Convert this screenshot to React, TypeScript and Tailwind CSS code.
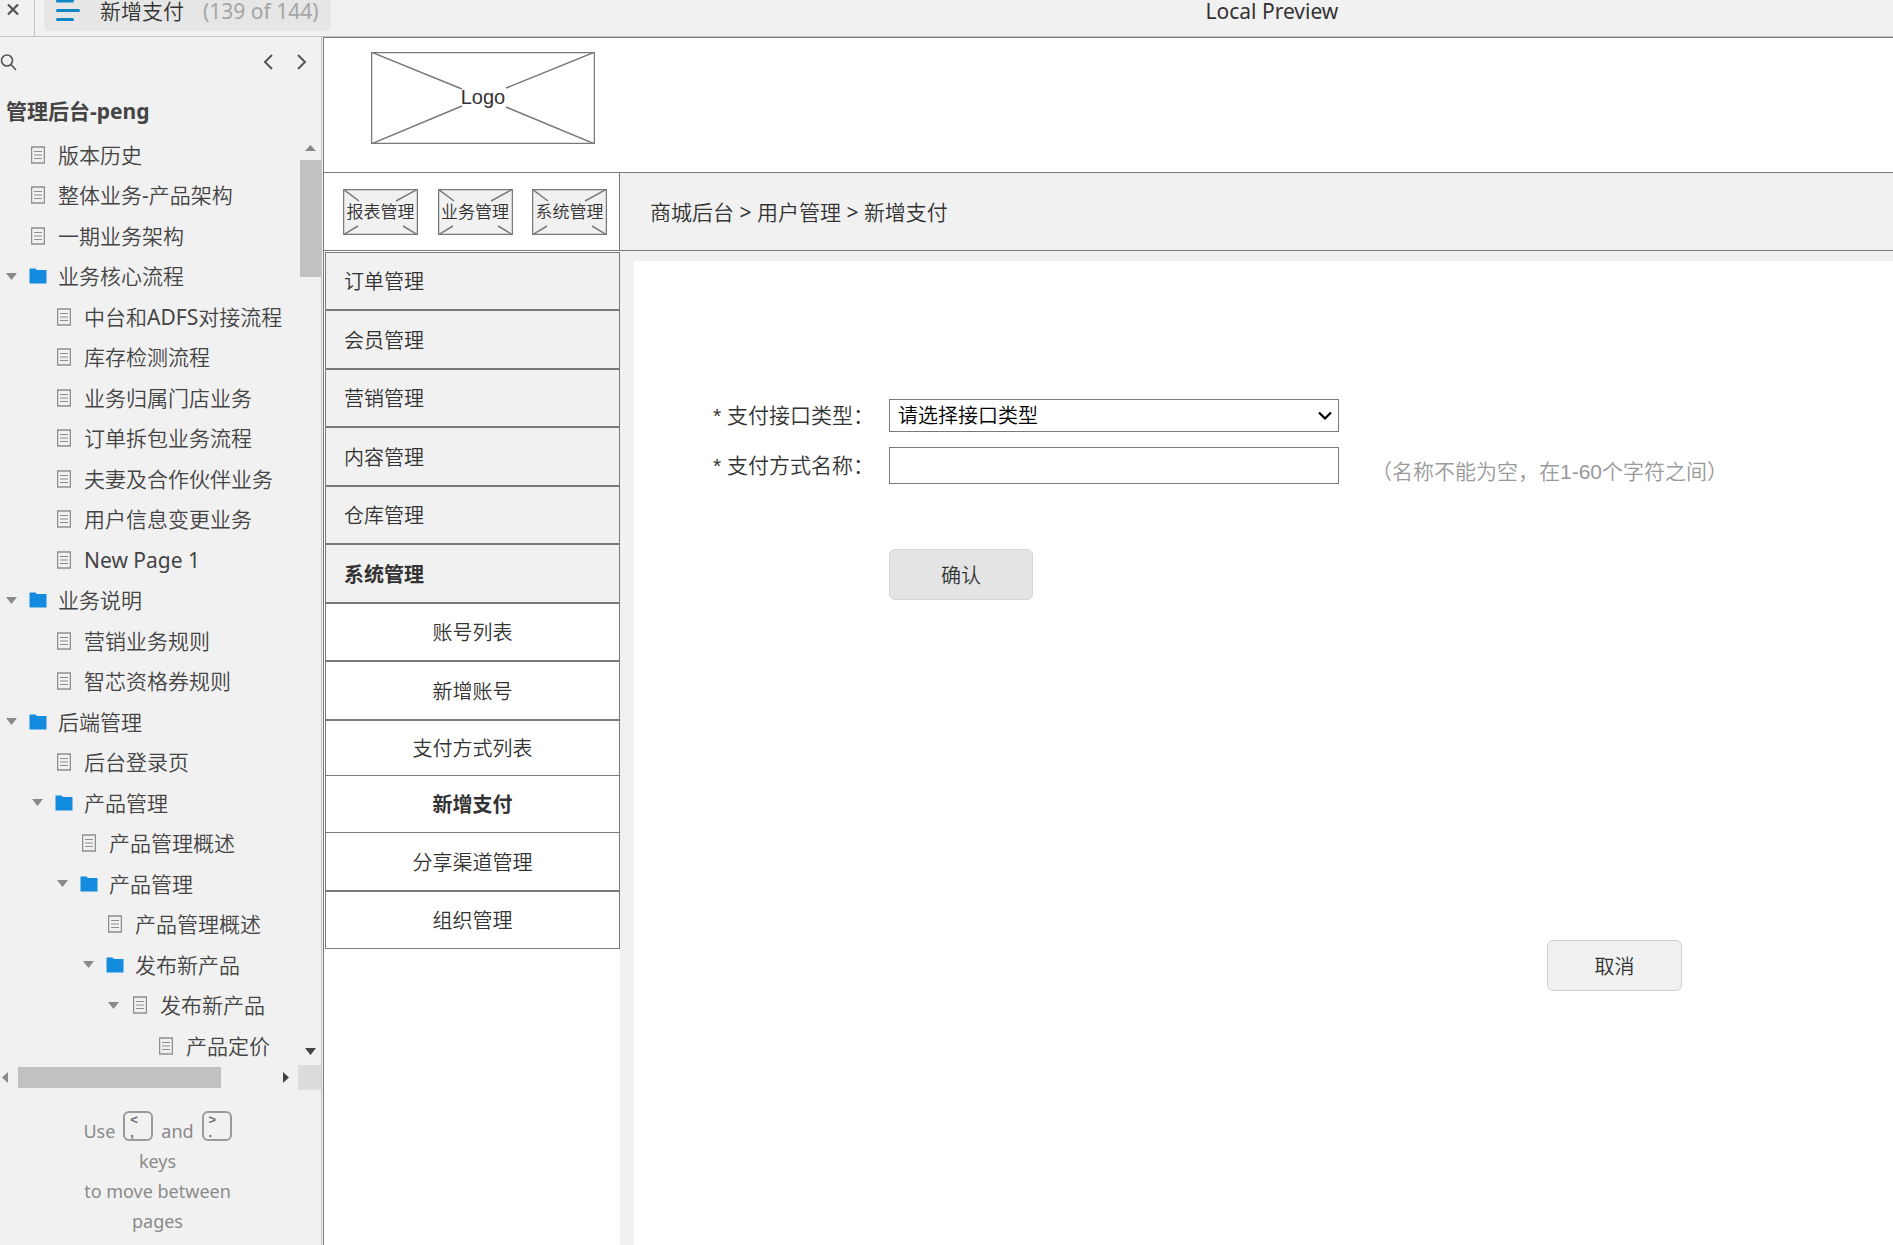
import {ReactNode} from "react";

type TreeItem = {
  label: string
  depth: number
  icon: 'page' | 'folder'
  open?: boolean
}

const treeItems: TreeItem[] = [
  {label: '版本历史', depth: 0, icon: 'page'},
  {label: '整体业务-产品架构', depth: 0, icon: 'page'},
  {label: '一期业务架构', depth: 0, icon: 'page'},
  {label: '业务核心流程', depth: 0, icon: 'folder', open: true},
  {label: '中台和ADFS对接流程', depth: 1, icon: 'page'},
  {label: '库存检测流程', depth: 1, icon: 'page'},
  {label: '业务归属门店业务', depth: 1, icon: 'page'},
  {label: '订单拆包业务流程', depth: 1, icon: 'page'},
  {label: '夫妻及合作伙伴业务', depth: 1, icon: 'page'},
  {label: '用户信息变更业务', depth: 1, icon: 'page'},
  {label: 'New Page 1', depth: 1, icon: 'page'},
  {label: '业务说明', depth: 0, icon: 'folder', open: true},
  {label: '营销业务规则', depth: 1, icon: 'page'},
  {label: '智芯资格券规则', depth: 1, icon: 'page'},
  {label: '后端管理', depth: 0, icon: 'folder', open: true},
  {label: '后台登录页', depth: 1, icon: 'page'},
  {label: '产品管理', depth: 1, icon: 'folder', open: true},
  {label: '产品管理概述', depth: 2, icon: 'page'},
  {label: '产品管理', depth: 2, icon: 'folder', open: true},
  {label: '产品管理概述', depth: 3, icon: 'page'},
  {label: '发布新产品', depth: 3, icon: 'folder', open: true},
  {label: '发布新产品', depth: 4, icon: 'page', open: true},
  {label: '产品定价', depth: 5, icon: 'page'},
]

const indents = ['pl-[6px]', 'pl-[32px]', 'pl-[57px]', 'pl-[83px]', 'pl-[108px]', 'pl-[134px]']

const mainMenu = ['订单管理', '会员管理', '营销管理', '内容管理', '仓库管理', '系统管理']

const subMenu = [
  {label: '账号列表', className: 'h-[58px] border-b-2'},
  {label: '新增账号', className: 'h-[59px] border-b-2'},
  {label: '支付方式列表', className: 'h-[55px] border-b'},
  {label: '新增支付', className: 'h-[57px] border-b font-bold'},
  {label: '分享渠道管理', className: 'h-[59px] border-b-2'},
  {label: '组织管理', className: 'h-[57px] border-b'},
]

// Chinese runs keep the thin weight, latin runs get the regular one
const MixedText = ({text}: {text: string}) => (
  <>
    {text.split(/([ -~]+)/).map((part, idx) => (
      idx % 2 ? <span key={idx} className="font-normal">{part}</span> : part
    ))}
  </>
)

const PageIcon = () => (
  <svg width="14" height="18" viewBox="0 0 14 18" fill="none" stroke="#8e8e8e">
    <rect x="0.5" y="1" width="13" height="16" strokeWidth="1.5"/>
    <path d="M3 5.5h8M3 9h8M3 12.5h8"/>
  </svg>
)

const FolderIcon = () => (
  <svg width="18" height="16" viewBox="0 0 18 16">
    <path d="M0.5 15.500V0.500h6l1.500 1.500h9.500v13.500z" fill="#138ce0"/>
  </svg>
)

const Triangle = ({dir, fill = '#8a8a8a'}: {dir: 'up' | 'down' | 'left' | 'right', fill?: string}) => {
  const paths = {
    up: 'M0 9L5.500 3L11 9z',
    down: 'M0 2h11L5.500 9z',
    left: 'M8 0v11L2 5.500z',
    right: 'M3 0v11L9 5.500z',
  }
  return (
    <svg width="11" height="11" viewBox="0 0 11 11" className="shrink-0">
      <path d={paths[dir]} fill={fill}/>
    </svg>
  )
}

const KeyCap = ({top, bottom}: {top: string, bottom: string}) => (
  <span className="flex h-[30px] w-[30px] flex-col items-start rounded-md border-2 border-[#9b9b9b] pl-[5px] font-['Liberation_Sans',sans-serif] text-[13px] leading-[13px] font-bold text-[#6c6c6c]">
    <span className="block h-[13px]">{top}</span>
    <span className="block h-[13px]">{bottom}</span>
  </span>
)

const TopBar = () => (
  <header className="flex h-[37px] items-start border-b border-[#c4c4c4] bg-[#f1f1f1]">
    <button aria-label="Close" className="flex h-9 w-[35px] items-start border-r border-[#c4c4c4] pt-1 pl-[7px]">
      <svg width="12" height="12" viewBox="0 0 12 12" stroke="#555" strokeWidth="2.2">
        <path d="M1 0.500l10 10M11 0.500l-10 10"/>
      </svg>
    </button>
    <button className="ml-[9px] flex h-[31px] items-start rounded-b-md bg-[#e6e6e6] pr-3 pl-3">
      <svg width="24" height="22" viewBox="0 0 24 22" stroke="#0f86c4" strokeWidth="3" strokeLinecap="round">
        <path d="M1.500 1h15M1.500 10.500h21M1.500 19.500h15"/>
      </svg>
      <span className="ml-5 text-[21px] leading-[22px] whitespace-nowrap text-[#333]">新增支付</span>
      <span className="ml-[19px] text-[21px] leading-[22px] font-normal whitespace-nowrap text-[#a5a5a5]">(139 of 144)</span>
    </button>
    <h1 className="ml-[875px] text-[21px] leading-[22px] font-normal whitespace-nowrap text-[#333]">Local Preview</h1>
  </header>
)

const Sidebar = () => (
  <aside className="flex w-[322px] shrink-0 flex-col border-r border-[#c4c4c4] bg-[#f1f1f1] text-[#444]">
    <div className="flex h-[50px] items-center pr-[14px]">
      <button aria-label="Search" className="mr-auto">
        <svg width="17" height="17" viewBox="0 0 17 17" fill="none" stroke="#555" strokeWidth="1.6">
          <circle cx="7" cy="6.500" r="5.500"/>
          <path d="M11 10.500l5 5.500"/>
        </svg>
      </button>
      <button aria-label="Previous page">
        <svg width="12" height="16" viewBox="0 0 12 16" fill="none" stroke="#555" strokeWidth="2">
          <path d="M9 1L2 8l7 7"/>
        </svg>
      </button>
      <button aria-label="Next page" className="ml-5">
        <svg width="12" height="16" viewBox="0 0 12 16" fill="none" stroke="#555" strokeWidth="2">
          <path d="M3 1l7 7l-7 7"/>
        </svg>
      </button>
    </div>
    <h2 className="flex h-[47px] items-center pt-[2px] pl-[6px] text-[21px] font-bold">管理后台-peng</h2>
    <div className="flex">
      <ul className="min-w-0 flex-1">
        {treeItems.map((item, idx) => (
          <li key={idx} className={`flex h-10 items-center pt-px even:h-[41px] ${indents[item.depth]}`}>
            {item.open ? <button aria-label="Toggle"><Triangle dir="down"/></button> : <span className="w-[11px]"/>}
            <a href="#" className="flex items-center whitespace-nowrap">
              <span className="ml-3 flex w-[18px] justify-center">
                {item.icon === 'folder' ? <FolderIcon/> : <PageIcon/>}
              </span>
              <span className="ml-[11px] text-[21px] leading-10"><MixedText text={item.label}/></span>
            </a>
          </li>
        ))}
      </ul>
      <div className="flex w-[21px] flex-col items-center pt-2 pb-2">
        <Triangle dir="up"/>
        <div className="mt-[7px] mb-auto h-[117px] w-full bg-[#c1c1c1]"/>
        <Triangle dir="down" fill="#444"/>
      </div>
    </div>
    <div className="flex h-[25px] items-center">
      <Triangle dir="left"/>
      <div className="ml-[7px] h-[21px] w-[203px] bg-[#c1c1c1]"/>
      <span className="ml-auto flex"><Triangle dir="right" fill="#444"/></span>
      <div className="ml-[7px] h-full w-[23px] bg-[#dcdcdc]"/>
    </div>
    <p className="pt-[21px] pr-[6px] text-center text-[18px] leading-[30px] font-normal text-[#8a8a8a]">
      <span className="flex justify-center gap-2 whitespace-nowrap">
        <span className="pt-[5px]">Use</span>
        <KeyCap top="<" bottom=","/>
        <span className="pt-[5px]">and</span>
        <KeyCap top=">" bottom="."/>
      </span>
      <span className="block">keys</span>
      <span className="block whitespace-nowrap">to move between</span>
      <span className="block">pages</span>
    </p>
  </aside>
)

const CrossBox = ({children}: {children: ReactNode}) => (
  <a href="#" className="grid h-[46px] w-[75px] place-items-center bg-[#f1f1f1]">
    <svg className="col-start-1 row-start-1" width="75" height="46" viewBox="0 0 75 46" fill="none" stroke="#797979">
      <rect x="0.500" y="0.500" width="74" height="45" strokeWidth="1.500"/>
      <path d="M0 0L16 12M75 0L53 12M0 46L15 37M75 46L60 37" strokeWidth="1.500"/>
    </svg>
    <span className="col-start-1 row-start-1 text-[17px] leading-6 whitespace-nowrap">{children}</span>
  </a>
)

const MenuColumn = () => (
  <div className="w-[296px] shrink-0 bg-white">
    <div className="flex h-[78px] items-center justify-between border-r border-b border-[#797979] pr-3 pl-[19px]">
      <CrossBox>报表管理</CrossBox>
      <CrossBox>业务管理</CrossBox>
      <CrossBox>系统管理</CrossBox>
    </div>
    <nav className="mt-px ml-px border-x border-t border-[#797979] text-[20px]">
      <ul>
        {mainMenu.map((label) => (
          <li
            key={label}
            className="flex items-center border-b-2 border-[#797979] bg-[#f1f1f1] pt-[2px] pl-[18px] odd:h-[58px] even:h-[59px] last:font-bold"
          >
            <a href="#">{label}</a>
          </li>
        ))}
      </ul>
      <ul>
        {subMenu.map((item) => (
          <li key={item.label} className={`flex items-center justify-center border-[#797979] pt-[2px] ${item.className}`}>
            <a href="#">{item.label}</a>
          </li>
        ))}
      </ul>
    </nav>
  </div>
)

const PaymentForm = () => (
  <form className="flex-1 bg-white pt-[138px] pl-[79px]">
    <div className="flex items-center">
      <label htmlFor="type" className="w-44 font-['Liberation_Sans','Noto_Sans_CJK_SC',sans-serif] text-[21px] leading-8 whitespace-nowrap">* 支付接口类型：</label>
      <div className="grid w-[450px] items-center">
        <select
          id="type"
          className="col-start-1 row-start-1 h-[33px] appearance-none border border-[#797979] bg-white pl-2 text-[20px] leading-7 text-black"
        >
          <option>请选择接口类型</option>
        </select>
        <svg className="pointer-events-none col-start-1 row-start-1 mr-[7px] justify-self-end" width="14" height="10" viewBox="0 0 14 10" fill="none" stroke="#000" strokeWidth="2.2">
          <path d="M1 1.500l6 6l6-6"/>
        </svg>
      </div>
    </div>
    <div className="mt-[15px] flex items-center">
      <label htmlFor="name" className="w-44 font-['Liberation_Sans','Noto_Sans_CJK_SC',sans-serif] text-[21px] leading-8 whitespace-nowrap">* 支付方式名称：</label>
      <input id="name" type="text" className="h-[37px] w-[450px] border border-[#797979] bg-white px-2 text-[20px]"/>
      <span className="ml-8 pt-3 font-['Liberation_Sans','Noto_Sans_CJK_SC',sans-serif] text-[21px] leading-6 whitespace-nowrap text-[#999]">
        （名称不能为空，在1-60个字符之间）
      </span>
    </div>
    <button type="button" className="mt-[65px] ml-44 block h-[51px] w-[144px] rounded-md border border-[#d7d7d7] bg-[#e4e4e4] pt-[2px] text-[20px]">
      确认
    </button>
    <div className="mt-[340px] flex justify-end pr-[211px]">
      <button type="button" className="h-[51px] w-[135px] rounded-md border border-[#d0d0d0] bg-[#f1f1f1] pt-[2px] text-[20px]">
        取消
      </button>
    </div>
  </form>
)

export default function App() {
  return (
    <div className="flex min-h-screen flex-col bg-[#f1f1f1] font-['Noto_Sans','Noto_Sans_CJK_SC',sans-serif] font-[350] text-[#333]">
      <TopBar/>
      <div className="flex flex-1">
        <Sidebar/>
        <main className="ml-px flex min-w-0 flex-1 flex-col border-t border-l border-[#797979]">
          <div className="flex h-[135px] items-start border-b border-[#797979] bg-white pt-[14px] pl-[47px]">
            <div className="grid place-items-center">
              <svg className="col-start-1 row-start-1" width="224" height="92" viewBox="0 0 224 92" fill="none" stroke="#797979" strokeWidth="1.500">
                <rect x="0.500" y="0.500" width="223" height="91"/>
                <path d="M0 0L91 37M224 0L135 36M0 92L91 54M224 92L135 55"/>
              </svg>
              <span className="col-start-1 row-start-1 pb-[2px] font-['Liberation_Sans',sans-serif] text-[20px] leading-6">Logo</span>
            </div>
          </div>
          <div className="flex flex-1">
            <MenuColumn/>
            <div className="flex min-w-0 flex-1 flex-col">
              <div className="flex h-[78px] items-center border-b border-[#797979] pt-[2px] pl-[30px] text-[21px] whitespace-pre">
                <MixedText text="商城后台 > 用户管理 > 新增支付"/>
              </div>
              <div className="flex flex-1 pt-[10px] pl-[14px]">
                <PaymentForm/>
              </div>
            </div>
          </div>
        </main>
      </div>
    </div>
  )
}
